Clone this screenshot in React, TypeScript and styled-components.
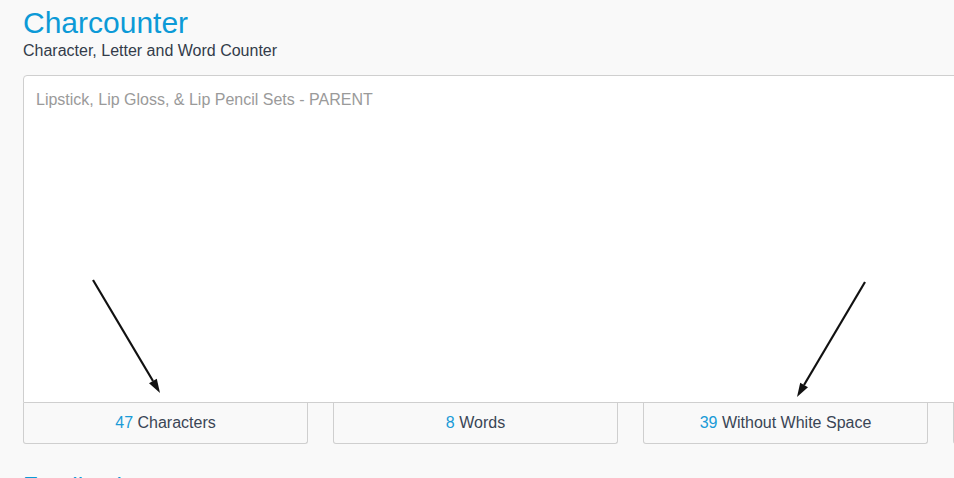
import { useState } from "react";
import styled, { createGlobalStyle } from "styled-components";

const GlobalStyle = createGlobalStyle`
  html, body {
    margin: 0;
    padding: 0;
    background: #f9f9f9;
    overflow: hidden;
    font-family: "Liberation Sans", Arial, sans-serif;
  }
`;

const SAMPLE = "Lipstick, Lip Gloss, & Lip Pencil Sets - PARENT";

const countWords = (text: string) =>
  text
    .split(/\s+/)
    .filter((t) => t.length > 0 && t !== "-").length;

const App = () => {
  const [text, setText] = useState(SAMPLE);

  const stats = [
    { value: text.length, label: "Characters" },
    { value: countWords(text), label: "Words" },
    { value: text.replace(/\s/g, "").length, label: "Without White Space" },
    { value: text.split(/\n/).length, label: "Lines" },
  ];

  return (
    <Page>
      <GlobalStyle />
      <Container>
        <Title>Charcounter</Title>
        <Subtitle>Character, Letter and Word Counter</Subtitle>
        <Editor value={text} onChange={(e) => setText(e.target.value)} />
        <StatRow>
          {stats.map((s) => (
            <StatBox key={s.label}>
              <Num>{s.value}</Num> {s.label}
            </StatBox>
          ))}
        </StatRow>
        <SectionHeading>Feedback</SectionHeading>
      </Container>
      <Annotations viewBox="0 0 954 478" width="954" height="478">
        <line x1="93" y1="280" x2="153" y2="381" stroke="#111" strokeWidth="2.2" />
        <polygon points="160,393 149,383.3 156.8,378.7" fill="#111" />
        <line x1="865" y1="282" x2="804" y2="385" stroke="#111" strokeWidth="2.2" />
        <polygon points="797,397 800.2,382.7 808,387.3" fill="#111" />
      </Annotations>
    </Page>
  );
};

export default App;

const Page = styled.div`
  position: relative;
  width: 954px;
  height: 478px;
  overflow: hidden;
`;

const Container = styled.div`
  width: 1215px;
  padding: 6px 0 0 23px;
`;

const Title = styled.h1`
  margin: 0;
  font-size: 30px;
  line-height: 34px;
  font-weight: normal;
  color: #0c9ad7;
`;

const Subtitle = styled.p`
  margin: 1px 0 14px;
  font-size: 16px;
  line-height: 20px;
  color: #333c4a;
`;

const Editor = styled.textarea`
  display: block;
  box-sizing: border-box;
  width: 100%;
  height: 328px;
  margin: 0;
  padding: 13px 12px 12px;
  border: 1px solid #cfcfcf;
  border-radius: 4px 4px 0 0;
  background: #fff;
  color: #9a9a9a;
  font-family: "Liberation Sans", Arial, sans-serif;
  font-size: 16px;
  line-height: 1.42857;
  resize: none;
  outline: none;
`;

const StatRow = styled.div`
  display: grid;
  grid-template-columns: repeat(4, 285px);
  column-gap: 25px;
`;

const StatBox = styled.div`
  box-sizing: border-box;
  height: 41px;
  padding-top: 1px;
  padding-bottom: 1px;
  border: 1px solid #cfcfcf;
  border-top: none;
  border-radius: 0 0 3px 3px;
  background: #f9f9f9;
  text-align: center;
  font-size: 16px;
  line-height: 38px;
  color: #3a4555;
`;

const Num = styled.span`
  color: #1a9bd7;
`;

const SectionHeading = styled.h2`
  margin: 29px 0 0;
  font-size: 24px;
  line-height: 1.1;
  font-weight: normal;
  color: #0c9ad7;
`;

const Annotations = styled.svg`
  position: absolute;
  left: 0;
  top: 0;
  pointer-events: none;
`;
